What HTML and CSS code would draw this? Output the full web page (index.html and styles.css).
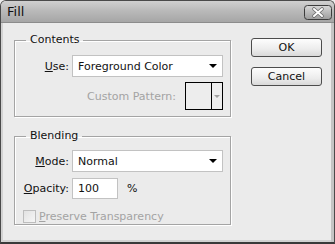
FILE: index.html
```html
<!DOCTYPE html>
<html lang="en">
<head>
    <meta charset="UTF-8">
    <title>Fill</title>
    <link rel="stylesheet" href="styles.css">
</head>
<body>
    <div class="window">
        <div class="titlebar">
            <span class="title">Fill</span>
            <span class="close">
                <svg width="28" height="15" viewBox="0 0 28 15">
                    <defs>
                        <linearGradient id="cg" x1="0" y1="0" x2="0" y2="1">
                            <stop offset="0" stop-color="#d8d8d8"/>
                            <stop offset="1" stop-color="#9c9c9c"/>
                        </linearGradient>
                    </defs>
                    <rect x="0.5" y="0.5" width="27" height="14" rx="3" fill="url(#cg)" stroke="#3c3c3c"/>
                    <path d="M10 4 L18 11 M18 4 L10 11" stroke="#6a6a6a" stroke-width="3.6" stroke-linecap="round"/>
                    <path d="M10 4 L18 11 M18 4 L10 11" stroke="#ffffff" stroke-width="2" stroke-linecap="round"/>
                </svg>
            </span>
        </div>
        <div class="body">
            <div class="groups">
                <fieldset class="group contents">
                    <legend>Contents</legend>
                    <div class="row">
                        <label class="lbl"><u>U</u>se:</label>
                        <div class="select">
                            <span>Foreground Color</span>
                            <span class="arrow"></span>
                        </div>
                    </div>
                    <div class="row pattern-row">
                        <span class="lbl-off">Custom Pattern:</span>
                        <div class="pattern">
                            <span class="swatch"></span>
                            <span class="pattern-btn"><span class="arrow arrow-off"></span></span>
                        </div>
                    </div>
                </fieldset>
                <fieldset class="group blending">
                    <legend>Blending</legend>
                    <div class="row">
                        <label class="lbl"><u>M</u>ode:</label>
                        <div class="select">
                            <span>Normal</span>
                            <span class="arrow"></span>
                        </div>
                    </div>
                    <div class="row opacity-row">
                        <label class="lbl"><u>O</u>pacity:</label>
                        <div class="input">100</div>
                        <span class="unit">%</span>
                    </div>
                    <div class="check-row">
                        <span class="checkbox"></span>
                        <span class="lbl-off"><u>P</u>reserve Transparency</span>
                    </div>
                </fieldset>
            </div>
            <div class="buttons">
                <button class="btn">OK</button>
                <button class="btn">Cancel</button>
            </div>
        </div>
    </div>
</body>
</html>
```

FILE: styles.css
```css
html, body {
    margin: 0;
    padding: 0;
    background: #ececec;
}
body {
    font-family: "DejaVu Sans", Verdana, sans-serif;
    font-size: 11px;
    color: #111;
}
.window {
    width: 335px;
    height: 244px;
    box-sizing: border-box;
    border: 1px solid #4a4a4a;
    border-bottom: 2px solid #3a3a3a;
    border-radius: 6px 6px 0 0;
    background: #ebebeb;
    box-shadow: inset 2px 0 0 #d2d2d2, inset -3px 0 0 #c4c4c4, inset 0 -2px 0 #d2d2d2;
    overflow: hidden;
}
.titlebar {
    height: 21px;
    display: flex;
    align-items: center;
    justify-content: space-between;
    padding: 0 2px 0 6px;
    background: linear-gradient(#d0d0d0, #bababa 45%, #a6a6a6);
    border-bottom: 1px solid #8c8c8c;
}
.title {
    font-size: 13px;
    color: #111;
}
.close {
    display: flex;
    margin-top: 1px;
}
.body {
    display: flex;
    padding: 10px 0 0 13px;
}
.groups {
    display: flex;
    flex-direction: column;
    gap: 12px;
}
.group {
    width: 217px;
    box-sizing: border-box;
    margin: 0;
    padding: 8px 7px 6px 0;
    border: 1px solid #a4a4a4;
    box-shadow: 1px 1px 0 #fff, inset 1px 1px 0 #fff;
}
.group legend {
    padding: 0 4px;
    margin-left: 11px;
    line-height: 14px;
}
.row {
    display: flex;
    align-items: center;
}
.lbl {
    width: 54px;
    text-align: right;
    margin-right: 3px;
}
.select {
    width: 151px;
    height: 22px;
    box-sizing: border-box;
    border: 1px solid #c2c2c2;
    background: #fff;
    display: flex;
    align-items: center;
    justify-content: space-between;
    padding: 0 5px 0 5px;
}
.arrow {
    width: 0;
    height: 0;
    border-left: 4px solid transparent;
    border-right: 4px solid transparent;
    border-top: 4px solid #000;
}
.arrow-off {
    border-left-width: 3px;
    border-right-width: 3px;
    border-top: 3px solid #a0a0a0;
}
.pattern-row {
    justify-content: flex-end;
    margin-top: 5px;
}
.lbl-off {
    color: #a3a3a3;
}
.pattern-row .lbl-off {
    margin-right: 9px;
}
.pattern {
    width: 38px;
    height: 28px;
    box-sizing: border-box;
    border: 1px solid #000;
    display: flex;
    background: #ededed;
}
.swatch {
    flex: 1;
    border-right: 1px solid #000;
}
.pattern-btn {
    width: 10px;
    display: flex;
    align-items: center;
    justify-content: center;
}
.blending {
    padding-top: 7px;
    padding-bottom: 1px;
}
.opacity-row {
    margin-top: 6px;
}
.input {
    width: 46px;
    height: 21px;
    box-sizing: border-box;
    border: 1px solid #c2c2c2;
    background: #fff;
    padding: 3px 0 0 5px;
}
.unit {
    margin-left: 9px;
}
.check-row {
    display: flex;
    align-items: center;
    margin: 11px 0 0 8px;
}
.checkbox {
    width: 13px;
    height: 13px;
    box-sizing: border-box;
    border: 1px solid #bdbdbd;
    background: linear-gradient(135deg, #e2e2e2, #f6f6f6);
    margin-right: 3px;
}
.buttons {
    display: flex;
    flex-direction: column;
    gap: 10px;
    margin: 5px 0 0 20px;
}
.btn {
    width: 71px;
    height: 19px;
    box-sizing: border-box;
    padding: 0;
    border: 1px solid #4c4c4c;
    border-radius: 3px;
    background: linear-gradient(#fdfdfd, #ececec 60%, #d9d9d9);
    font: 11px "DejaVu Sans", Verdana, sans-serif;
    color: #111;
}
```
